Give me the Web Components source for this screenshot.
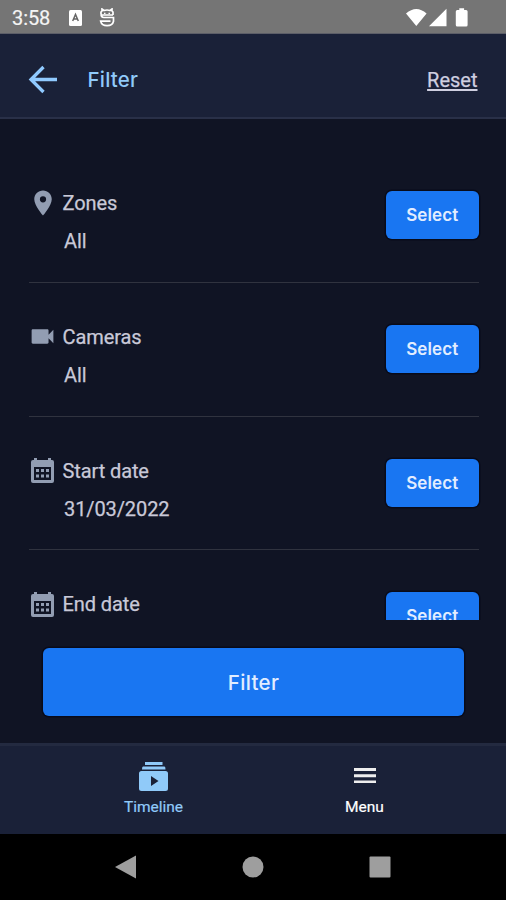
<!DOCTYPE html>
<html lang="en"><head><meta charset="utf-8"><title>Filter</title>
<style>
html,body{margin:0;height:100%;background:#101424}
body{font-family:Roboto,"Noto Sans",sans-serif;overflow:hidden}
</style></head><body>
<filter-screen></filter-screen>
<script>
const define=(name,html)=>{
  const t=document.createElement('template');t.innerHTML=html;
  customElements.define(name,class extends HTMLElement{
    constructor(){super();this.attachShadow({mode:'open'}).append(t.content.cloneNode(true));}
  });
};
const icons={
  back:'<path d="M15.5 2 3 14.5 15.5 27M3 14.5H29" fill="none" stroke="currentColor" stroke-width="3.3"/>',
  place:'<path d="M12 2C8.13 2 5 5.13 5 9c0 5.25 7 13 7 13s7-7.750 7-13c0-3.870-3.130-7-7-7zm0 9.500a2.500 2.500 0 1 1 0-5 2.500 2.500 0 0 1 0 5z"/>',
  camera:'<path d="M17 10.500V7c0-.55-.45-1-1-1H4c-.55 0-1 .45-1 1v10c0 .55.45 1 1 1h12c.55 0 1-.45 1-1v-3.500l4 4v-11l-4 4z"/>',
  calendar:'<path fill-rule="evenodd" d="M4 2V0h3v2h11V0h3v2h1q2 0 2 2v19q0 2-2 2H3q-2 0-2-2V4q0-2 2-2zM4 9v13h17V9z"/><path d="M6 11h3v3H6zm5 0h3v3h-3zm5 0h3v3h-3zM6 16.500h3v3H6zm5 0h3v3h-3zm5 0h3v3h-3z"/>',
  timeline:'<path fill-rule="evenodd" d="M6 0h17.500v3H6zM4 4.500h21.500q1 0 1 3H3q0-3 1-3zM2.500 9h24q2.500 0 2.500 2.500v15q0 2.500-2.500 2.500h-24Q0 29 0 26.500v-15Q0 9 2.500 9zM12 14v10l7.500-5z"/>',
  menu:'<path d="M0 0h22v3H0zM0 6.200h22v3H0zM0 12.300h22v3H0z"/>'
};
class AppIcon extends HTMLElement{
  constructor(){super();this.attachShadow({mode:'open'});}
  connectedCallback(){
    this.shadowRoot.innerHTML=`<style>:host{display:block;flex:none}svg{display:block;width:100%;height:100%;fill:currentColor}</style><svg viewBox="${this.getAttribute('box')}">${icons[this.getAttribute('name')]}</svg>`;
  }
}
customElements.define('app-icon',AppIcon);

define('status-bar',`<style>
:host{display:flex;height:34px;background:#757575;color:#fff;align-items:center;padding:2px 38px 0 12px;box-sizing:border-box;border-bottom:1px solid #5c5e68}
span{font-size:20px;line-height:24px;width:57px;letter-spacing:-.1px;color:#f4f4f4;-webkit-text-stroke:.2px}svg{display:block}.s{flex:1}
</style><span>3:58</span>
<svg width="13" height="16" viewBox="0 0 13 16"><rect width="13" height="16" rx="1.500" fill="#fff"/><path d="M3.700 11 6.500 4.500 9.300 11M4.800 9h3.400" fill="none" stroke="#666" stroke-width="1.500"/></svg>
<svg width="16" height="19" viewBox="0 0 16 19" style="margin-left:17px" fill="none" stroke="#fff" stroke-width="1.700"><path d="M14 7H3Q2 7 2 5.500V4l1-1V1l2 1.500q3-1 6 0L13 1v2l1 1v3M2 5.500q0 4 3 4h9.500v3.700q-1 4.500-6.400 4.500T1.700 13.200H11.500"/><path d="M5 5.300h1.500m3 0H11" stroke-width="1.200"/></svg>
<div class="s"></div>
<svg width="62" height="20" viewBox="0 0 62 20" fill="#fff"><path d="M0 5.500Q10.300-3.500 20.600 5.500L10.300 18zM23 18.200 40.500.800v17.400zM53.300.300h4.800v1.800h2q1.500 0 1.500 1.500v13.500q0 1.500-1.500 1.500h-8.800q-1.500 0-1.500-1.500V3.600q0-1.500 1.500-1.500h2z"/></svg>`);

define('app-header',`<style>
:host{display:flex;height:85px;box-sizing:border-box;background:#1a2138;border-bottom:2px solid #293048;align-items:center;padding:7px 28.500px 0 27.500px}
app-icon{width:31px;height:29px;color:#90caff}
h1{margin:2px 0 0 29px;font:500 20.500px/26px Inter,sans-serif;color:#90caf9;flex:1;letter-spacing:.2px}
a{font-size:20px;line-height:26px;margin-top:1px;color:#cfcfe0;-webkit-text-stroke:.25px;text-decoration:underline;text-decoration-thickness:1.500px;text-underline-offset:2px}
</style><app-icon name="back" box="0 0 31 29"></app-icon><h1><slot></slot></h1><a>Reset</a>`);

define('app-button',`<style>
:host{display:flex;align-items:center;justify-content:center;box-sizing:border-box;background:#1976f2;color:#e2edff;border-radius:6px;box-shadow:0 0 0 1.500px #080b1a;font:600 17px/20px Inter,sans-serif}
</style><slot></slot>`);

define('filter-row',`<style>
:host{display:flex;height:133.650px;box-sizing:border-box;border-bottom:1.500px solid #30333f;padding-top:42px;align-items:flex-start;justify-content:space-between;color:#c9c9d8;font-size:20px;line-height:24px;-webkit-text-stroke:.25px;letter-spacing:-.1px}
.t{display:flex;align-items:center;height:24px}.i{width:34px;height:26px;display:flex;align-items:center;justify-content:flex-start}
.v{margin:14px 0 0 35.500px}app-button{width:92.500px;height:48px;-webkit-text-stroke:0;letter-spacing:.1px}
</style><div><div class="t"><div class="i"><slot name="icon"></slot></div><slot></slot></div><div class="v"><slot name="value"></slot></div></div><app-button>Select</app-button>`);

define('filter-list',`<style>
:host{display:block;height:501px;box-sizing:border-box;padding:30.300px 27.500px 0 28.500px;overflow:hidden}
app-icon{color:#929db2}.p{width:30px;height:30px;margin-left:-1px}.c{width:29px;height:29px;margin-left:-1px}.d{width:25px;height:25px;margin-left:1px}
</style>
<filter-row><app-icon slot="icon" class="p" name="place" box="0 0 24 24"></app-icon>Zones<span slot="value">All</span></filter-row>
<filter-row><app-icon slot="icon" class="c" name="camera" box="0 0 24 24"></app-icon>Cameras<span slot="value">All</span></filter-row>
<filter-row><app-icon slot="icon" class="d" name="calendar" box="0 0 25 25"></app-icon>Start date<span slot="value">31/03/2022</span></filter-row>
<filter-row><app-icon slot="icon" class="d" name="calendar" box="0 0 25 25"></app-icon>End date</filter-row>`);

define('tab-bar',`<style>
:host{display:grid;grid-template-columns:211px 211px;justify-content:center;height:91px;box-sizing:border-box;background:#1a2138;border-top:3px solid #232a40;padding-left:12px}
div{display:flex;flex-direction:column;align-items:center;padding-top:16px;font-size:15.500px;line-height:20px;color:#fff;-webkit-text-stroke:.2px}
.a{color:#90caf9}.b{height:29px;display:flex;align-items:center;margin-bottom:6px}.x{width:29px;height:29px}.y{width:22px;height:15.500px;color:#eee;margin-top:-2px}
</style><div class="a"><span class="b"><app-icon class="x" name="timeline" box="0 0 29 29"></app-icon></span>Timeline</div>
<div><span class="b"><app-icon class="y" name="menu" box="0 0 22 15.300"></app-icon></span>Menu</div>`);

define('system-nav',`<style>
:host{display:flex;height:66px;background:#000;justify-content:space-between;align-items:center;padding:0 115px;box-sizing:border-box}svg{fill:#9e9e9e}
</style><svg width="22" height="24"><path d="M0 12 21 .500v23z"/></svg><svg width="22" height="22"><circle cx="11" cy="11" r="10.500"/></svg><svg width="22" height="22"><rect x=".500" y=".500" width="21" height="21" rx="1"/></svg>`);

define('filter-screen',`<style>
:host{display:flex;flex-direction:column;width:506px;height:900px;background:#101424}
.f{height:123px;box-sizing:border-box;padding:28px 42px 0 43px}.f app-button{height:67.500px;font-size:20.500px;font-weight:500;letter-spacing:.35px;padding-top:2px}
</style><status-bar></status-bar><app-header>Filter</app-header><filter-list></filter-list><div class="f"><app-button>Filter</app-button></div><tab-bar></tab-bar><system-nav></system-nav>`);
</script></body></html>
